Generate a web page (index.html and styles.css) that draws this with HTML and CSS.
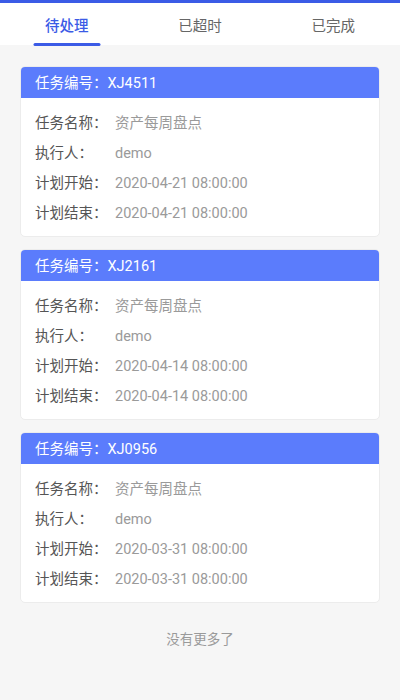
FILE: index.html
```html
<!DOCTYPE html>
<html lang="zh-CN">
  <head>
    <meta charset="UTF-8" />
    <meta name="viewport" content="width=device-width, initial-scale=1.0" />
    <title>巡检任务</title>
    <link rel="stylesheet" href="styles.css">
  </head>

  <body>
    <div class="tabs">
      <div class="tab active">待处理</div>
      <div class="tab">已超时</div>
      <div class="tab">已完成</div>
    </div>

    <div class="list">
      <div class="card">
        <div class="card-head">任务编号：XJ4511</div>
        <div class="card-body">
          <div class="row"><span class="label">任务名称：</span><span class="value">资产每周盘点</span></div>
          <div class="row"><span class="label">执行人：</span><span class="value">demo</span></div>
          <div class="row"><span class="label">计划开始：</span><span class="value">2020-04-21 08:00:00</span></div>
          <div class="row"><span class="label">计划结束：</span><span class="value">2020-04-21 08:00:00</span></div>
        </div>
      </div>

      <div class="card">
        <div class="card-head">任务编号：XJ2161</div>
        <div class="card-body">
          <div class="row"><span class="label">任务名称：</span><span class="value">资产每周盘点</span></div>
          <div class="row"><span class="label">执行人：</span><span class="value">demo</span></div>
          <div class="row"><span class="label">计划开始：</span><span class="value">2020-04-14 08:00:00</span></div>
          <div class="row"><span class="label">计划结束：</span><span class="value">2020-04-14 08:00:00</span></div>
        </div>
      </div>

      <div class="card">
        <div class="card-head">任务编号：XJ0956</div>
        <div class="card-body">
          <div class="row"><span class="label">任务名称：</span><span class="value">资产每周盘点</span></div>
          <div class="row"><span class="label">执行人：</span><span class="value">demo</span></div>
          <div class="row"><span class="label">计划开始：</span><span class="value">2020-03-31 08:00:00</span></div>
          <div class="row"><span class="label">计划结束：</span><span class="value">2020-03-31 08:00:00</span></div>
        </div>
      </div>

      <div class="no-more">没有更多了</div>
    </div>
  </body>
</html>
```

FILE: styles.css
```css
:root {
  --primary-color: #3b5be6;
  --head-color: #5b7cfc;
  --text-color: #555;
  --muted-color: #9a9a9a;
  --bg-color: #f6f6f6;
}

* {
  box-sizing: border-box;
  margin: 0;
  padding: 0;
  font-family: Roboto, "Noto Sans CJK SC", sans-serif;
}

body {
  background-color: var(--bg-color);
  color: var(--text-color);
  min-height: 700px;
}

.tabs {
  display: flex;
  background: white;
  border-top: 3px solid var(--primary-color);
  height: 45px;
}

.tab {
  flex: 1;
  display: flex;
  align-items: center;
  justify-content: center;
  font-size: 14.5px;
  color: #666;
  position: relative;
}

.tab.active {
  color: var(--primary-color);
  font-weight: 500;
}

.tab.active::after {
  content: "";
  position: absolute;
  bottom: -1px;
  left: 50%;
  transform: translateX(-50%);
  width: 67px;
  height: 3px;
  border-radius: 2px;
  background: var(--primary-color);
}

.list {
  padding: 21px 20px 0;
}

.card {
  background: white;
  border: 1px solid #ececec;
  border-radius: 5px;
  overflow: hidden;
  margin-bottom: 12px;
}

.card-head {
  background: var(--head-color);
  color: white;
  height: 31px;
  padding: 3px 14px 0;
  line-height: 28px;
  font-size: 14.5px;
}

.card-body {
  padding: 11px 14px 7px;
}

.row {
  display: flex;
  height: 30px;
  line-height: 30px;
  font-size: 14.5px;
}

.label {
  width: 80px;
  color: var(--text-color);
}

.value {
  color: var(--muted-color);
}

.no-more {
  text-align: center;
  color: var(--muted-color);
  font-size: 13.5px;
  line-height: 20px;
  padding-top: 14px;
}
```
